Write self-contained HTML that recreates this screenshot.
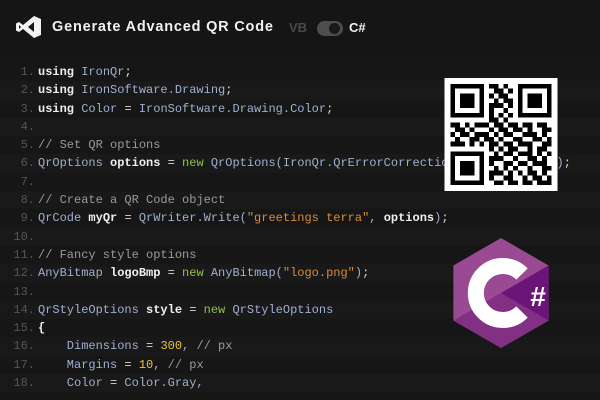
<!DOCTYPE html>
<html><head><style>
*{margin:0;padding:0;box-sizing:border-box}
body{width:600px;height:400px;background:#161616;overflow:hidden;position:relative;font-family:"Liberation Sans",sans-serif}
.hdr{position:absolute;left:0;top:0;width:600px;height:52px;background:#151515}
.title{position:absolute;left:52px;top:19px;color:#f2f2f2;font-weight:bold;font-size:14.5px;letter-spacing:0.8px}
.vb{position:absolute;left:289px;top:20px;color:#4a4a4a;font-weight:bold;font-size:13px}
.cs{position:absolute;left:349px;top:20px;color:#f2f2f2;font-weight:bold;font-size:13px}
.tog{position:absolute;left:317px;top:21px;width:26px;height:15px;border-radius:8px;background:#4d4d4d}
.tog:after{content:"";position:absolute;left:12px;top:2px;width:11px;height:11px;border-radius:50%;background:#1a1a1a}
.code{position:absolute;left:0;top:63px;width:600px;font-family:"Liberation Mono",monospace;font-size:12px}
.l{height:18.3px;line-height:18.3px;white-space:pre;position:relative;padding-left:38px;color:#9fb0cf}
.l:nth-child(even){background:#191919}
.n{position:absolute;left:0;width:35px;text-align:right;color:#555}
.k{color:#ececec;font-weight:bold}
.v{color:#f0f0f0;font-weight:bold}
.c{color:#9a9a9a}
.g{color:#8fc24a}
.s{color:#d88c3c}
.y{color:#e7c63b}
.p{color:#d8d8d8}
</style></head><body>
<div class="hdr">
<svg style="position:absolute;left:15px;top:16px" width="27" height="22" viewBox="0 0 27 22">
<path fill="#f2f2f2" d="M19 0 L26 3 L26 19 L19 22 L8 13 L4 16 L1 14.5 L1 7.5 L4 6 L8 9 Z M19 6 L13 11 L19 16 Z M4 9 L4 13 L6 11 Z"/>
</svg>
<div class="title">Generate Advanced QR Code</div>
<div class="vb">VB</div><div class="tog"></div><div class="cs">C#</div>
</div>
<div class="code">
<div class="l"><span class="n">1.</span><span class="k">using</span> IronQr<span class="p">;</span></div>
<div class="l"><span class="n">2.</span><span class="k">using</span> IronSoftware.Drawing<span class="p">;</span></div>
<div class="l"><span class="n">3.</span><span class="k">using</span> Color <span class="p">=</span> IronSoftware.Drawing.Color<span class="p">;</span></div>
<div class="l"><span class="n">4.</span></div>
<div class="l"><span class="n">5.</span><span class="c">// Set QR options</span></div>
<div class="l"><span class="n">6.</span>QrOptions <span class="v">options</span> <span class="p">=</span> <span class="g">new</span> QrOptions(IronQr.QrErrorCorrectionLevel.High, <span class="y">20</span>)<span class="p">;</span></div>
<div class="l"><span class="n">7.</span></div>
<div class="l"><span class="n">8.</span><span class="c">// Create a QR Code object</span></div>
<div class="l"><span class="n">9.</span>QrCode <span class="v">myQr</span> <span class="p">=</span> QrWriter.Write(<span class="s">"greetings terra"</span>, <span class="v">options</span>)<span class="p">;</span></div>
<div class="l"><span class="n">10.</span></div>
<div class="l"><span class="n">11.</span><span class="c">// Fancy style options</span></div>
<div class="l"><span class="n">12.</span>AnyBitmap <span class="v">logoBmp</span> <span class="p">=</span> <span class="g">new</span> AnyBitmap(<span class="s">"logo.png"</span>)<span class="p">;</span></div>
<div class="l"><span class="n">13.</span></div>
<div class="l"><span class="n">14.</span>QrStyleOptions <span class="v">style</span> <span class="p">=</span> <span class="g">new</span> QrStyleOptions</div>
<div class="l"><span class="n">15.</span><span class="v">{</span></div>
<div class="l"><span class="n">16.</span>    Dimensions <span class="p">=</span> <span class="y">300</span>, <span class="c">// px</span></div>
<div class="l"><span class="n">17.</span>    Margins <span class="p">=</span> <span class="y">10</span>, <span class="c">// px</span></div>
<div class="l"><span class="n">18.</span>    Color <span class="p">=</span> Color.Gray,</div>
</div>
<svg style="position:absolute;left:444px;top:78px" width="114" height="113" viewBox="-1.2 -1.2 23.4 23.4" shape-rendering="crispEdges">
<rect x="-1.2" y="-1.2" width="23.4" height="23.4" fill="#fff"/>
<path fill="#000" d="
M0 0h7v1h-7zM8 0h2v1h-2zM11 0h1v1h-1zM14 0h7v1h-7z
M0 1h1v1h-1zM6 1h1v1h-1zM9 1h2v1h-2zM12 1h1v1h-1zM14 1h1v1h-1zM20 1h1v1h-1z
M0 2h1v1h-1zM2 2h3v1h-3zM6 2h1v1h-1zM8 2h1v1h-1zM10 2h2v1h-2zM14 2h1v1h-1zM16 2h3v1h-3zM20 2h1v1h-1z
M0 3h1v1h-1zM2 3h3v1h-3zM6 3h1v1h-1zM9 3h1v1h-1zM11 3h2v1h-2zM14 3h1v1h-1zM16 3h3v1h-3zM20 3h1v1h-1z
M0 4h1v1h-1zM2 4h3v1h-3zM6 4h1v1h-1zM8 4h3v1h-3zM12 4h1v1h-1zM14 4h1v1h-1zM16 4h3v1h-3zM20 4h1v1h-1z
M0 5h1v1h-1zM6 5h1v1h-1zM8 5h1v1h-1zM11 5h1v1h-1zM14 5h1v1h-1zM20 5h1v1h-1z
M0 6h7v1h-7zM8 6h1v1h-1zM10 6h1v1h-1zM12 6h1v1h-1zM14 6h7v1h-7z
M8 7h2v1h-2zM11 7h1v1h-1z
M0 8h2v1h-2zM3 8h1v1h-1zM5 8h3v1h-3zM9 8h2v1h-2zM12 8h2v1h-2zM15 8h2v1h-2zM18 8h2v1h-2z
M1 9h2v1h-2zM4 9h1v1h-1zM8 9h1v1h-1zM10 9h2v1h-2zM13 9h2v1h-2zM16 9h1v1h-1zM19 9h2v1h-2z
M0 10h1v1h-1zM2 10h2v1h-2zM5 10h3v1h-3zM9 10h1v1h-1zM11 10h2v1h-2zM15 10h3v1h-3zM19 10h1v1h-1z
M1 11h1v1h-1zM4 11h2v1h-2zM7 11h2v1h-2zM10 11h1v1h-1zM13 11h2v1h-2zM17 11h2v1h-2zM20 11h1v1h-1z
M0 12h3v1h-3zM4 12h1v1h-1zM6 12h1v1h-1zM8 12h2v1h-2zM11 12h2v1h-2zM14 12h3v1h-3zM19 12h2v1h-2z
M8 13h1v1h-1zM10 13h1v1h-1zM12 13h2v1h-2zM16 13h1v1h-1zM18 13h2v1h-2z
M0 14h7v1h-7zM9 14h1v1h-1zM11 14h2v1h-2zM14 14h3v1h-3zM18 14h1v1h-1zM20 14h1v1h-1z
M0 15h1v1h-1zM6 15h1v1h-1zM8 15h3v1h-3zM13 15h1v1h-1zM16 15h2v1h-2zM19 15h1v1h-1z
M0 16h1v1h-1zM2 16h3v1h-3zM6 16h1v1h-1zM8 16h1v1h-1zM11 16h2v1h-2zM14 16h2v1h-2zM17 16h3v1h-3z
M0 17h1v1h-1zM2 17h3v1h-3zM6 17h1v1h-1zM9 17h1v1h-1zM11 17h1v1h-1zM13 17h1v1h-1zM16 17h1v1h-1zM19 17h2v1h-2z
M0 18h1v1h-1zM2 18h3v1h-3zM6 18h1v1h-1zM8 18h3v1h-3zM12 18h1v1h-1zM14 18h1v1h-1zM16 18h2v1h-2zM19 18h1v1h-1z
M0 19h1v1h-1zM6 19h1v1h-1zM8 19h1v1h-1zM11 19h2v1h-2zM15 19h1v1h-1zM17 19h2v1h-2zM20 19h1v1h-1z
M0 20h7v1h-7zM9 20h2v1h-2zM12 20h2v1h-2zM15 20h2v1h-2zM18 20h3v1h-3z"/>
</svg>
<svg style="position:absolute;left:451px;top:236px" width="100" height="114" viewBox="-50 -57 100 114">
<polygon points="0,-55 47.6,-27.5 47.6,27.5 0,55 -47.6,27.5 -47.6,-27.5" fill="#9a4993"/>
<polygon points="-47.6,27.5 47.6,-27.5 47.6,27.5 0,55" fill="#813084"/>
<polygon points="0,0 47.6,-27.5 47.6,27.5" fill="#6a1577"/>
<path d="M21 -19 A27 27 0 1 0 21 19" fill="none" stroke="#fff" stroke-width="16"/>
<text x="37" y="13" fill="#fff" font-family="Liberation Sans,sans-serif" font-weight="bold" font-size="28" text-anchor="middle">#</text>
</svg>
</body></html>
